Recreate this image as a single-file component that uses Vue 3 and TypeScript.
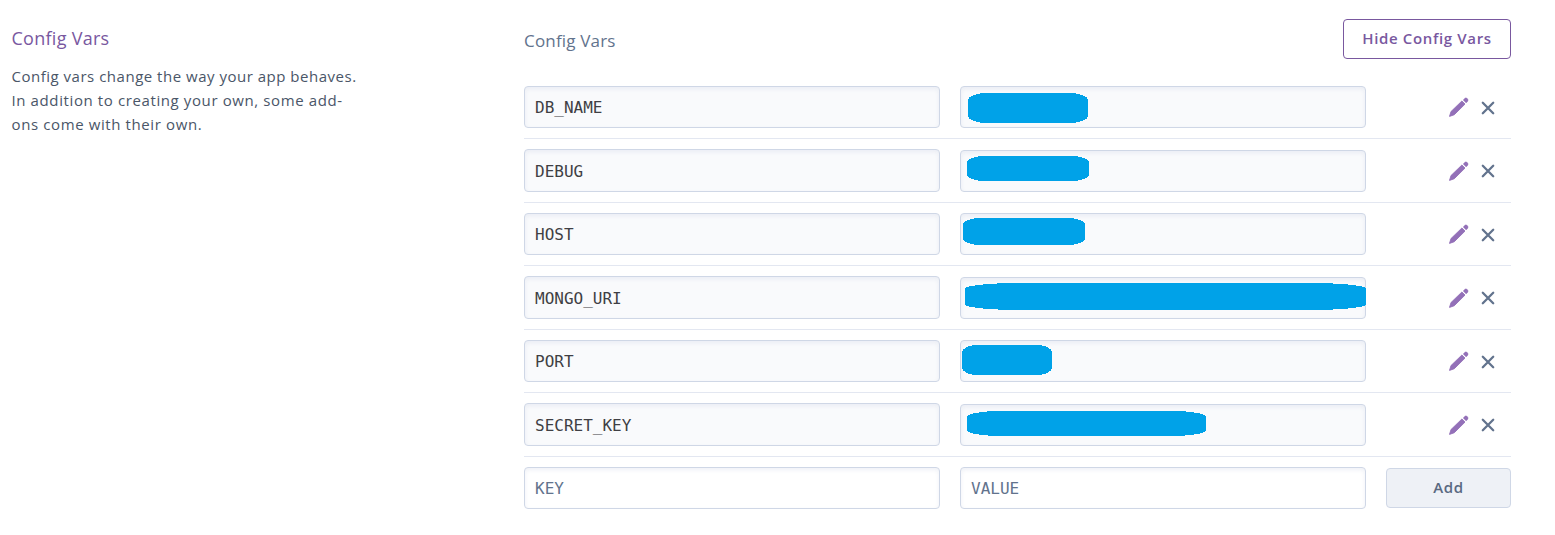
<script setup lang="ts">
interface Mask {
  x: number
  y: number
  w: number
  h: number
  path: string
}
interface ConfigVar {
  name: string
  mask: Mask
}

// Brush-like rounded block that hides a value
function mask(x: number, y: number, w: number, h: number, rx: number, ry: number): Mask {
  const path =
    `M0 ${ry}C0 ${ry * 0.5} ${rx * 0.45} 0 ${rx} 0H${w - rx}C${w - rx * 0.45} 0 ${w} ${ry * 0.5} ${w} ${ry}` +
    `V${h - ry}C${w} ${h - ry * 0.5} ${w - rx * 0.45} ${h} ${w - rx} ${h}H${rx}C${rx * 0.45} ${h} 0 ${h - ry * 0.5} 0 ${h - ry}Z`
  return { x, y, w, h, path }
}

const vars: ConfigVar[] = [
  { name: 'DB_NAME', mask: mask(8, 7, 120, 30, 18, 7) },
  { name: 'DEBUG', mask: mask(7, 6, 122, 25, 18, 6) },
  { name: 'HOST', mask: mask(3, 5, 122, 27, 18, 6) },
  { name: 'MONGO_URI', mask: mask(5, 6, 401, 27, 54, 5.5) },
  { name: 'PORT', mask: mask(2, 5, 90, 30, 15, 7) },
  { name: 'SECRET_KEY', mask: mask(7, 7, 239, 25, 34, 5.5) },
]
</script>

<template>
  <div class="page">
    <aside class="intro">
      <h2>Config Vars</h2>
      <p>Config vars change the way your app behaves.<br /><span class="loose">In addition to creating your own, some add-<br />ons come with their own.</span></p>
    </aside>
    <main class="panel">
      <header class="head">
        <h3>Config Vars</h3>
        <button class="hide" type="button">Hide Config Vars</button>
      </header>
      <div v-for="item in vars" :key="item.name" class="row">
        <div class="field key">{{ item.name }}</div>
        <div class="field value">
          <svg
            class="mask"
            :style="{ left: item.mask.x - 1 + 'px', top: item.mask.y - 1 + 'px' }"
            :width="item.mask.w"
            :height="item.mask.h"
            shape-rendering="crispEdges"
          >
            <path :d="item.mask.path" fill="#00a2e8" />
          </svg>
        </div>
        <div class="actions">
          <svg class="pencil" width="20" height="20" viewBox="0 0 20 20">
            <path d="M.5 19.4 2 14.6 12.9 4 16 7.1 5.3 17.7Z" fill="#9370b8" stroke="#9370b8" stroke-width=".9" stroke-linejoin="round" />
            <path d="M14.1 3 15.6 1.4Q16.9.2 18.2 1.4L18.6 1.8Q19.8 3.1 18.6 4.4L17.1 6Z" fill="#9370b8" stroke="#9370b8" stroke-width=".3" />
          </svg>
          <svg class="cross" width="14" height="14" viewBox="0 0 14 14">
            <path d="M1.8 1.8 12.2 12.2M12.2 1.8 1.8 12.2" fill="none" stroke="#62738d" stroke-width="2.3" stroke-linecap="round" />
          </svg>
        </div>
      </div>
      <div class="row new">
        <div class="field key">KEY</div>
        <div class="field value">VALUE</div>
        <button class="add" type="button">Add</button>
      </div>
    </main>
  </div>
</template>

<style>
body {
  margin: 0;
  background: #fff;
}
</style>

<style scoped>
.page {
  display: grid;
  grid-template-columns: 512.5px 987px;
  box-sizing: border-box;
  height: 535px;
  padding-left: 11.5px;
  overflow: hidden;
  font-family: 'Open Sans', 'Noto Sans', sans-serif;
}
h2,
h3,
p {
  margin: 0;
  font-weight: 400;
}
h2 {
  padding-top: 24px;
  font-size: 18px;
  line-height: 28px;
  letter-spacing: 0.27px;
  color: #79589f;
}
p {
  margin-top: 12px;
  font-size: 15px;
  line-height: 24px;
  letter-spacing: 0.51px;
  color: #4a5668;
  white-space: nowrap;
}
.loose {
  letter-spacing: 0.61px;
}
.head {
  display: flex;
  justify-content: space-between;
  box-sizing: border-box;
  height: 75.5px;
  padding-top: 19px;
}
h3 {
  padding-top: 9px;
  font-size: 17px;
  line-height: 26px;
  letter-spacing: 0.18px;
  color: #62738d;
}
button {
  box-sizing: border-box;
  height: 40px;
  padding: 0 0 2px;
  border-radius: 4px;
  font-family: inherit;
  font-size: 15px;
  font-weight: 600;
  line-height: 36px;
  letter-spacing: 0.65px;
}
.hide {
  width: 168px;
  border: 1px solid #79589f;
  background: #fff;
  color: #79589f;
}
.row {
  display: grid;
  grid-template-columns: 416px 406px 125px;
  column-gap: 20px;
  align-items: start;
  box-sizing: border-box;
  height: 63.5px;
  border-bottom: 1px solid #e3e7f1;
}
.field {
  position: relative;
  box-sizing: border-box;
  height: 42px;
  margin-top: 10.5px;
  padding-left: 10px;
  border: 1px solid #cfd7e6;
  border-radius: 4px;
  background: #f9fafc;
  box-shadow: inset 0 2px 4px rgba(205, 213, 228, 0.35);
  font-family: 'DejaVu Sans Mono', monospace;
  font-size: 16px;
  line-height: 41px;
  color: #3f3f44;
}
.key {
  height: 42.5px;
  margin-top: 10.4px;
  padding-top: 0.2px;
}
.mask {
  position: absolute;
  display: block;
}
.actions {
  display: flex;
  align-items: center;
  height: 42px;
  margin-top: 10.5px;
  padding-left: 63px;
}
.cross {
  margin: 1px 0 0 12px;
}
.new {
  border-bottom: 0;
}
.new .field {
  background: #fff;
  color: #62738d;
}
.add {
  margin-top: 11.5px;
  padding-bottom: 3px;
  border: 1px solid #cfd7e6;
  background: #eef1f6;
  color: #596981;
}
</style>
